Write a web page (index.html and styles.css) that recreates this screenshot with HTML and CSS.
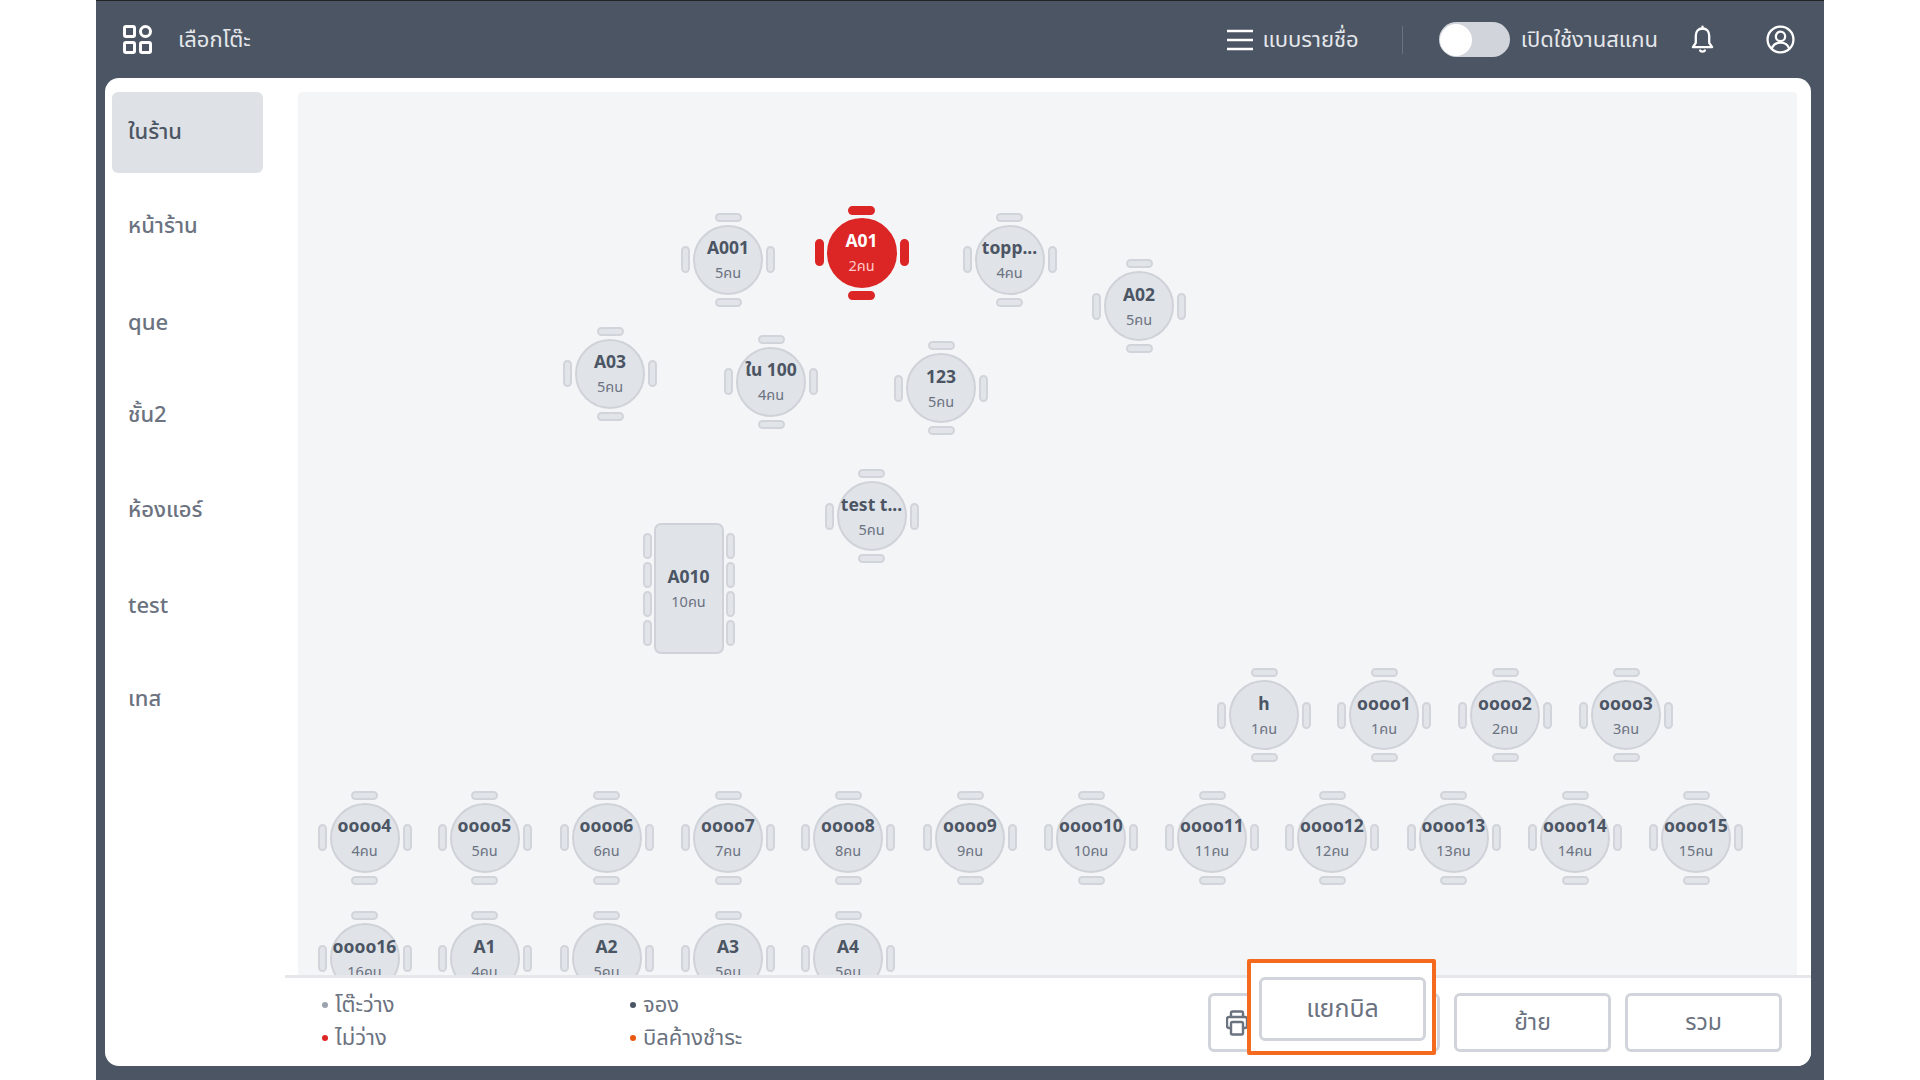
FILE: index.html
```html
<!DOCTYPE html>
<html lang="th">
<head>
    <meta charset="UTF-8">
    <meta name="viewport" content="width=device-width, initial-scale=1.0">
    <title>เลือกโต๊ะ</title>
    <link rel="stylesheet" href="styles.css">
</head>
<body>
    <div class="app">
        <header class="topbar">
            <svg class="icon-grid" viewBox="0 0 29 29" fill="none" stroke="#fff" stroke-width="3">
                <rect x="1.5" y="1.5" width="10" height="10" rx="1.5"/>
                <circle cx="22.5" cy="6.5" r="5"/>
                <rect x="1.5" y="17.5" width="10" height="10" rx="1.5"/>
                <rect x="17.5" y="17.5" width="10" height="10" rx="1.5"/>
            </svg>
            <span class="page-title">เลือกโต๊ะ</span>
            <div class="topbar-right">
                <svg class="icon-menu" viewBox="0 0 26 24" fill="none" stroke="#fff" stroke-width="2.6">
                    <path d="M0 3h26M0 12h26M0 21h26"/>
                </svg>
                <span class="top-label list-label">แบบรายชื่อ</span>
                <span class="top-divider"></span>
                <span class="toggle"><span class="toggle-knob"></span></span>
                <span class="top-label scan-label">เปิดใช้งานสแกน</span>
                <svg class="icon-bell" viewBox="0 0 24 30" fill="none" stroke="#fff" stroke-width="2.4" stroke-linejoin="round" stroke-linecap="round">
                    <path d="M12 3.5c-4.4 0-7 3.2-7 7.5v7.5L2 23h20l-3-4.500V11c0-4.300-2.600-7.500-7-7.500z"/>
                    <path d="M12 1.500v2M9.500 26.500c.6 1.500 4.400 1.500 5 0"/>
                </svg>
                <svg class="icon-user" viewBox="0 0 28 28" fill="none" stroke="#fff" stroke-width="2.2">
                    <circle cx="14" cy="14" r="12.500"/>
                    <circle cx="14" cy="11" r="4.500"/>
                    <path d="M5.500 23c1.500-4.500 4.500-6 8.500-6s7 1.500 8.500 6"/>
                </svg>
            </div>
        </header>

        <div class="panel">
            <nav class="sidebar">
                <a class="zone active">ในร้าน</a>
                <a class="zone">หน้าร้าน</a>
                <a class="zone">que</a>
                <a class="zone">ชั้น2</a>
                <a class="zone">ห้องแอร์</a>
                <a class="zone">test</a>
                <a class="zone">เทส</a>
            </nav>

            <main class="main">
                <div class="floor">
                    <div class="table" style="left:383px;top:120.5px"><div class="seat"><b>A001</b><span>5คน</span></div></div>
                    <div class="table busy" style="left:516.5px;top:113.5px"><div class="seat"><b>A01</b><span>2คน</span></div></div>
                    <div class="table" style="left:664.5px;top:120.5px"><div class="seat"><b>topp...</b><span>4คน</span></div></div>
                    <div class="table" style="left:794px;top:167px"><div class="seat"><b>A02</b><span>5คน</span></div></div>
                    <div class="table" style="left:265px;top:234.5px"><div class="seat"><b>A03</b><span>5คน</span></div></div>
                    <div class="table" style="left:426px;top:242.5px"><div class="seat"><b>ใน 100</b><span>4คน</span></div></div>
                    <div class="table" style="left:596px;top:249px"><div class="seat"><b>123</b><span>5คน</span></div></div>
                    <div class="table" style="left:526.5px;top:377px"><div class="seat"><b>test t...</b><span>5คน</span></div></div>

                    <div class="long-table" style="left:344.5px;top:431px">
                        <div class="chair-col"><i></i><i></i><i></i><i></i></div>
                        <div class="long-top"><b>A010</b><span>10คน</span></div>
                        <div class="chair-col"><i></i><i></i><i></i><i></i></div>
                    </div>

                    <div class="table" style="left:919px;top:576px"><div class="seat"><b>h</b><span>1คน</span></div></div>
                    <div class="table" style="left:1039px;top:576px"><div class="seat"><b>oooo1</b><span>1คน</span></div></div>
                    <div class="table" style="left:1160px;top:576px"><div class="seat"><b>oooo2</b><span>2คน</span></div></div>
                    <div class="table" style="left:1281px;top:576px"><div class="seat"><b>oooo3</b><span>3คน</span></div></div>

                    <div class="table" style="left:19.5px;top:698.5px"><div class="seat"><b>oooo4</b><span>4คน</span></div></div>
                    <div class="table" style="left:139.5px;top:698.5px"><div class="seat"><b>oooo5</b><span>5คน</span></div></div>
                    <div class="table" style="left:261.5px;top:698.5px"><div class="seat"><b>oooo6</b><span>6คน</span></div></div>
                    <div class="table" style="left:383px;top:698.5px"><div class="seat"><b>oooo7</b><span>7คน</span></div></div>
                    <div class="table" style="left:503px;top:698.5px"><div class="seat"><b>oooo8</b><span>8คน</span></div></div>
                    <div class="table" style="left:625px;top:698.5px"><div class="seat"><b>oooo9</b><span>9คน</span></div></div>
                    <div class="table" style="left:746px;top:698.5px"><div class="seat"><b>oooo10</b><span>10คน</span></div></div>
                    <div class="table" style="left:867px;top:698.5px"><div class="seat"><b>oooo11</b><span>11คน</span></div></div>
                    <div class="table" style="left:987px;top:698.5px"><div class="seat"><b>oooo12</b><span>12คน</span></div></div>
                    <div class="table" style="left:1108.5px;top:698.5px"><div class="seat"><b>oooo13</b><span>13คน</span></div></div>
                    <div class="table" style="left:1230px;top:698.5px"><div class="seat"><b>oooo14</b><span>14คน</span></div></div>
                    <div class="table" style="left:1351px;top:698.5px"><div class="seat"><b>oooo15</b><span>15คน</span></div></div>

                    <div class="table" style="left:19.5px;top:819px"><div class="seat"><b>oooo16</b><span>16คน</span></div></div>
                    <div class="table" style="left:139.5px;top:819px"><div class="seat"><b>A1</b><span>4คน</span></div></div>
                    <div class="table" style="left:261.5px;top:819px"><div class="seat"><b>A2</b><span>5คน</span></div></div>
                    <div class="table" style="left:383px;top:819px"><div class="seat"><b>A3</b><span>5คน</span></div></div>
                    <div class="table" style="left:503px;top:819px"><div class="seat"><b>A4</b><span>5คน</span></div></div>
                </div>

                <footer class="footer">
                    <ul class="legend">
                        <li><i class="dot dot-free"></i>โต๊ะว่าง</li>
                        <li><i class="dot dot-booked"></i>จอง</li>
                        <li><i class="dot dot-busy"></i>ไม่ว่าง</li>
                        <li><i class="dot dot-unpaid"></i>บิลค้างชำระ</li>
                    </ul>
                    <div class="actions">
                        <button class="btn btn-print">
                            <svg viewBox="0 0 22 26" fill="none" stroke="#6b7280" stroke-width="2.400" stroke-linejoin="round">
                                <path d="M5 7V3a1.500 1.500 0 0 1 1.500-1.500h9A1.500 1.500 0 0 1 17 3v4"/>
                                <path d="M5 18H3a2 2 0 0 1-2-2V9a2 2 0 0 1 2-2h16a2 2 0 0 1 2 2v7a2 2 0 0 1-2 2h-2"/>
                                <rect x="5" y="12" width="12" height="12.500" rx="1.500"/>
                            </svg>
                        </button>
                        <button class="btn">ย้าย</button>
                        <button class="btn">รวม</button>
                    </div>
                    <div class="callout"><button class="btn btn-split">แยกบิล</button></div>
                </footer>
            </main>
        </div>
    </div>
</body>
</html>
```

FILE: styles.css
```css
* {
    margin: 0;
    padding: 0;
    box-sizing: border-box;
    font-family: "Noto Sans", "Noto Sans Thai", "Open Sans", sans-serif;
}

body {
    background-color: white;
    height: 1080px;
    overflow: hidden;
}

.app {
    width: 1728px;
    height: 1080px;
    margin-left: 96px;
    padding: 0 13px 14px 9px;
    background-color: #4b5563;
    border-top: 1px solid #222;
    display: flex;
    flex-direction: column;
}

/* top bar */
.topbar {
    height: 77px;
    flex-shrink: 0;
    display: flex;
    align-items: center;
    padding-left: 18px;
}

.icon-grid {
    width: 29px;
    height: 29px;
}

.page-title {
    margin-left: 26px;
    font-size: 22px;
    color: #e5e7eb;
}

.topbar-right {
    margin-left: auto;
    display: flex;
    align-items: center;
}

.icon-menu {
    width: 26px;
    height: 24px;
    margin-left: 1px;
}

.top-label {
    font-size: 22px;
    color: #e5e7eb;
}

.list-label {
    margin-left: 9px;
}

.top-divider {
    width: 1px;
    height: 28px;
    margin: 0 36px 0 43px;
    background-color: #6b7280;
}

.toggle {
    width: 71px;
    height: 35px;
    border-radius: 18px;
    background-color: #d1d5db;
    display: flex;
    align-items: center;
    padding-left: 1px;
}

.toggle-knob {
    width: 32px;
    height: 32px;
    border-radius: 50%;
    background-color: white;
}

.scan-label {
    margin-left: 11px;
}

.icon-bell {
    width: 23px;
    height: 29px;
    margin-left: 33px;
}

.icon-user {
    width: 29px;
    height: 29px;
    margin: 0 16px 0 52px;
}

/* white panel */
.panel {
    flex: 1;
    min-height: 0;
    display: flex;
    padding-top: 14px;
    background-color: white;
    border-radius: 14px;
    overflow: hidden;
}

.sidebar {
    width: 193px;
    flex-shrink: 0;
    padding: 0 35px 0 7px;
    display: flex;
    flex-direction: column;
    gap: 13.5px;
}

.zone {
    height: 81px;
    flex-shrink: 0;
    display: flex;
    align-items: center;
    padding: 0 0 2px 16px;
    font-size: 22px;
    font-weight: 500;
    color: #6b7280;
    border-radius: 6px;
}

.zone.active {
    background-color: #dee2e6;
    color: #4b5563;
}

.main {
    flex: 1;
    min-width: 0;
    display: flex;
    flex-direction: column;
}

/* table plan */
.floor {
    flex: 1;
    min-height: 0;
    margin-right: 14px;
    position: relative;
    overflow: hidden;
    background-color: #f4f5f7;
    border-radius: 4px 4px 0 0;
}

.table {
    position: absolute;
    width: 94px;
    height: 94px;
    display: flex;
    align-items: center;
    justify-content: center;
}

.table::before,
.table::after,
.seat::before,
.seat::after {
    content: "";
    position: absolute;
    box-sizing: border-box;
    background-color: #e1e4e9;
    border: 2px solid #d1d4da;
    border-radius: 5px;
}

.table::before,
.table::after {
    top: 33.5px;
    width: 9px;
    height: 27px;
}

.table::before {
    left: 0;
}

.table::after {
    right: 0;
}

.seat::before,
.seat::after {
    left: 19.5px;
    width: 27px;
    height: 9px;
}

.seat::before {
    top: -14px;
}

.seat::after {
    bottom: -14px;
}

.seat,
.long-top {
    background-color: #e0e3e8;
    border: 2px solid #cfd3d9;
    display: flex;
    flex-direction: column;
    align-items: center;
    justify-content: center;
    flex-shrink: 0;
    color: #4b5563;
    padding-bottom: 2px;
}

.seat {
    position: relative;
    width: 70px;
    height: 70px;
    border-radius: 50%;
}

.seat b,
.long-top b {
    font-size: 17.5px;
    line-height: 24px;
    font-weight: 700;
    white-space: nowrap;
}

.seat span,
.long-top span {
    font-size: 14.5px;
    line-height: 20px;
    margin-top: 3px;
    color: #6b7280;
}

.table.busy::before,
.table.busy::after,
.table.busy .seat::before,
.table.busy .seat::after {
    background-color: #dc2626;
    border-color: #dc2626;
}

.table.busy .seat {
    background-color: #dc2626;
    border-color: #dc2626;
    color: white;
}

.table.busy .seat span {
    color: #fecaca;
}

.long-table {
    position: absolute;
    display: flex;
    align-items: flex-start;
    gap: 2px;
}

.long-top {
    width: 70px;
    height: 131px;
    border-radius: 7px;
}

.chair-col {
    display: flex;
    flex-direction: column;
    gap: 3px;
    padding-top: 10px;
}

.chair-col i {
    display: block;
    width: 9px;
    height: 26px;
    background-color: #e1e4e9;
    border: 2px solid #d1d4da;
    border-radius: 5px;
}

/* bottom bar */
.footer {
    position: relative;
    height: 91px;
    flex-shrink: 0;
    margin-left: -13px;
    padding: 0 29px 0 37px;
    border-top: 3px solid #e5e7eb;
    display: flex;
    justify-content: space-between;
    background-color: white;
}

.legend {
    list-style: none;
    width: 540px;
    padding-top: 10px;
    display: grid;
    grid-template-columns: 308px 1fr;
    grid-auto-rows: 33px;
}

.legend li {
    display: flex;
    align-items: center;
    font-size: 22px;
    color: #6b7280;
}

.dot {
    width: 6px;
    height: 6px;
    margin-right: 7px;
    border-radius: 50%;
}

.dot-free {
    background-color: #9ca3af;
}

.dot-booked {
    background-color: #4b5563;
}

.dot-busy {
    background-color: #dc2626;
}

.dot-unpaid {
    background-color: #ea580c;
}

.actions {
    display: flex;
    gap: 14px;
    padding-top: 15px;
}

.btn {
    width: 157px;
    height: 59px;
    background-color: white;
    border: 3px solid #d1d5db;
    border-radius: 6px;
    font-size: 23px;
    color: #6b7280;
    cursor: pointer;
}

.btn-print {
    width: 232px;
    text-align: left;
    padding-left: 15px;
}

.btn-print svg {
    display: block;
    width: 22px;
    height: 26px;
}

/* highlighted button drawn over the bar */
.callout {
    position: absolute;
    left: 962px;
    top: -19px;
    width: 189px;
    height: 96px;
    padding: 14px 8px 0 8px;
    background-color: white;
    border: 4px solid #f46a1f;
    border-radius: 2px;
}

.btn-split {
    display: block;
    width: 167px;
    height: 64px;
    font-size: 25px;
}
```
